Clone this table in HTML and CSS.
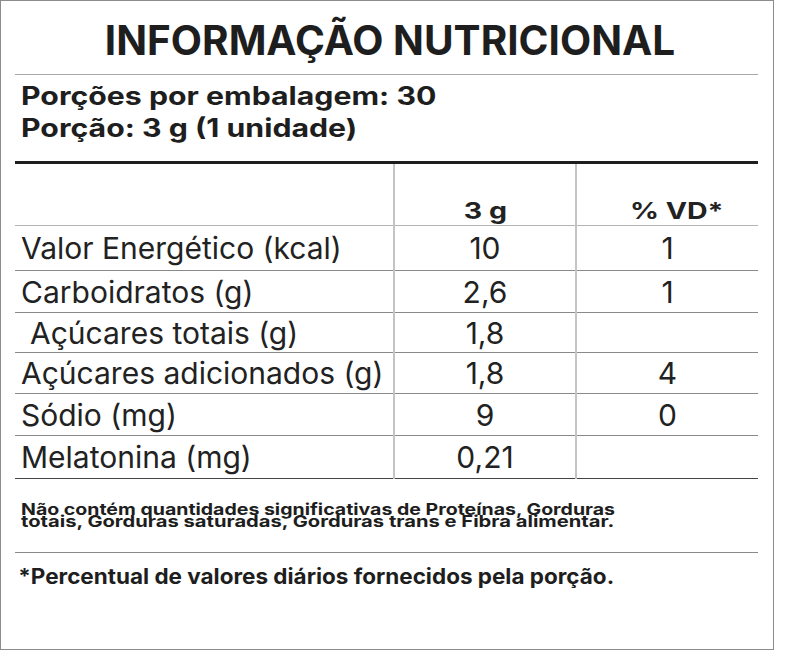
FILE: index.html
```html
<!DOCTYPE html>
<html lang="pt-BR">
<head>
<meta charset="utf-8">
<title>Informação Nutricional</title>
<link rel="stylesheet" href="styles.css">
</head>
<body>
<div class="label">
  <h1 class="title">INFORMAÇÃO NUTRICIONAL</h1>
  <div class="servings">
    <p>Porções por embalagem: 30</p>
    <p>Porção: 3 g (1 unidade)</p>
  </div>
  <table class="facts">
    <thead>
      <tr>
        <th class="name"></th>
        <th class="val"><span class="wide">3 g</span></th>
        <th class="val vd-head"><span class="wide">% VD*</span></th>
      </tr>
    </thead>
    <tbody>
      <tr><td class="name">Valor Energético (kcal)</td><td class="val">10</td><td class="val">1</td></tr>
      <tr><td class="name">Carboidratos (g)</td><td class="val">2,6</td><td class="val">1</td></tr>
      <tr><td class="name sub">Açúcares totais (g)</td><td class="val">1,8</td><td class="val"></td></tr>
      <tr><td class="name">Açúcares adicionados (g)</td><td class="val">1,8</td><td class="val">4</td></tr>
      <tr><td class="name">Sódio (mg)</td><td class="val">9</td><td class="val">0</td></tr>
      <tr><td class="name">Melatonina (mg)</td><td class="val">0,21</td><td class="val"></td></tr>
    </tbody>
  </table>
  <div class="note">
    <span class="note-text">Não contém quantidades significativas de Proteínas, Gorduras</span>
    <span class="note-text note-last">totais, Gorduras saturadas, Gorduras trans e Fibra alimentar.</span>
  </div>
  <p class="vd">*Percentual de valores diários fornecidos pela porção.</p>
</div>
</body>
</html>
```
FILE: styles.css
```css
html, body {
  margin: 0;
  padding: 0;
  background: #ffffff;
}

body {
  font-family: Inter, "Noto Sans", sans-serif;
  color: #1e1e1e;
}

.label {
  box-sizing: border-box;
  width: 774px;
  height: 650px;
  border: 1px solid #8c8c8c;
  padding: 0 15px 0 14px;
  overflow: hidden;
}

.title {
  margin: 0;
  padding: 15px 0 8px 7px;
  font-size: 40.5px;
  line-height: 50px;
  font-weight: 700;
  text-align: center;
  border-bottom: 1px solid #a8a8a8;
}

.servings {
  padding: 5px 6px 17px;
  border-bottom: 3px solid #1e1e1e;
}

.servings p {
  margin: 0;
  font-size: 25px;
  font-weight: 700;
  line-height: 32px;
  transform: scaleX(1.21);
  transform-origin: left center;
}

.facts {
  width: 100%;
  border-collapse: collapse;
  table-layout: fixed;
}

.facts th,
.facts td {
  padding: 0;
  border-bottom: 1px solid #8a8a8a;
  font-size: 30px;
  color: #222222;
}

.facts th {
  height: 59px;
  padding-bottom: 2px;
  font-size: 23px;
  line-height: 24px;
  font-weight: 700;
  vertical-align: bottom;
  border-bottom-color: #b4b4b4;
}

.facts th.vd-head {
  padding-left: 18px;
}

.facts .wide {
  display: inline-block;
  transform: scaleX(1.24);
  transform-origin: center;
}

.facts th.name,
.facts td.name {
  width: 372px;
  padding-left: 6px;
  text-align: left;
  font-weight: 400;
}

.facts td.sub {
  padding-left: 15px;
}

.facts td {
  height: 41px;
  line-height: 34px;
  vertical-align: middle;
}

.facts tbody tr:nth-child(1) td { height: 44px; }
.facts tbody tr:nth-child(3) td { height: 39px; }
.facts tbody tr:nth-child(4) td { height: 40px; }
.facts tbody tr:nth-child(6) td { height: 42px; }

.facts .val {
  text-align: center;
  border-left: 2px solid #c4c4c4;
}

.facts tbody tr:last-child td {
  border-bottom: 1px solid #444444;
}

.note {
  padding: 24px 6px 25px;
  border-bottom: 1px solid #8a8a8a;
}

.note-text {
  display: block;
  font-size: 16px;
  line-height: 12px;
  font-weight: 700;
  white-space: nowrap;
  transform: scaleX(1.22);
  transform-origin: left center;
}

.note-text.note-last {
  transform: scaleX(1.26);
}

.vd {
  margin: 0;
  padding: 12px 3px 0;
  font-size: 21px;
  line-height: 24px;
  font-weight: 700;
  transform: scaleX(1.07);
  transform-origin: left center;
}
```
